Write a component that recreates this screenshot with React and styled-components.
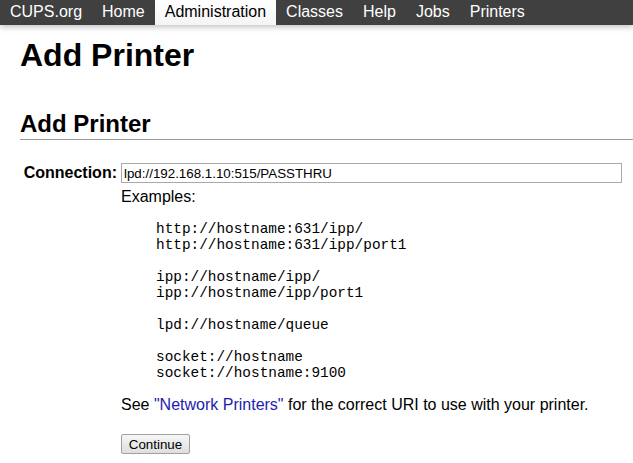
import React from 'react';
import styled, { createGlobalStyle } from 'styled-components';

const GlobalStyle = createGlobalStyle`
  html, body {
    margin: 0;
    padding: 0;
    background: #fff;
  }
  body {
    font-family: "Liberation Sans", Arial, sans-serif;
    font-size: 16px;
    color: #000;
  }
`;

const NavBar = styled.nav`
  display: flex;
  height: 25px;
  background: #404040;
  box-shadow: 0 2px 6px rgba(0, 0, 0, 0.25);
  position: relative;
`;

const NavItem = styled.a`
  display: block;
  padding: 0 10px;
  line-height: 24px;
  font-size: 16px;
  text-decoration: none;
  color: ${(p) => (p.$active ? '#000' : '#fff')};
  background: ${(p) => (p.$active ? 'linear-gradient(#fff, #f4f4f4)' : 'transparent')};
  white-space: nowrap;
`;

const Main = styled.main`
  padding: 12px 0 0 20px;
`;

const Title = styled.h1`
  margin: 0;
  font-size: 32px;
  line-height: 37px;
  font-weight: bold;
`;

const Section = styled.h2`
  margin: 36px 0 0;
  padding-bottom: 1px;
  font-size: 24px;
  line-height: 28px;
  font-weight: bold;
  border-bottom: 1px solid #999;
`;

const FormRow = styled.div`
  display: flex;
  align-items: flex-start;
  margin-top: 23px;
`;

const Label = styled.label`
  width: 97px;
  text-align: right;
  font-weight: bold;
  line-height: 18px;
  padding-top: 0.5px;
  margin-right: 4px;
`;

const Field = styled.div`
  display: flex;
  flex-direction: column;
  align-items: flex-start;
`;

const UriInput = styled.input`
  box-sizing: border-box;
  width: 501px;
  height: 20px;
  margin: 0;
  padding: 1px 2px;
  border: 1px solid #a9a9a9;
  font-family: "Liberation Sans", Arial, sans-serif;
  font-size: 13.333px;
  color: #000;
  outline: none;
`;

const Text = styled.p`
  margin: ${(p) => p.$top || 0}px 0 0;
  line-height: 18px;
`;

const Examples = styled.pre`
  margin: 15px 0 0;
  padding-left: 35px;
  font-family: "Liberation Mono", "Courier New", monospace;
  font-size: 14.4px;
  line-height: 16px;
`;

const Link = styled.a`
  color: #1c1cae;
  text-decoration: none;
`;

const Button = styled.button`
  box-sizing: border-box;
  margin-top: 20px;
  width: 69px;
  height: 20px;
  padding: 0;
  border: 1px solid #a0a0a0;
  border-radius: 2px;
  background: linear-gradient(#f6f6f6, #dedede);
  font-family: "Liberation Sans", Arial, sans-serif;
  font-size: 13.333px;
  color: #000;
`;

const navItems = ['CUPS.org', 'Home', 'Administration', 'Classes', 'Help', 'Jobs', 'Printers'];

const examples = `http://hostname:631/ipp/
http://hostname:631/ipp/port1

ipp://hostname/ipp/
ipp://hostname/ipp/port1

lpd://hostname/queue

socket://hostname
socket://hostname:9100`;

export default function App() {
  return (
    <>
      <GlobalStyle />
      <NavBar>
        {navItems.map((item) => (
          <NavItem key={item} href="#" $active={item === 'Administration'}>
            {item}
          </NavItem>
        ))}
      </NavBar>
      <Main>
        <Title>Add Printer</Title>
        <Section>Add Printer</Section>
        <FormRow>
          <Label htmlFor="uri">Connection:</Label>
          <Field>
            <UriInput id="uri" defaultValue="lpd://192.168.1.10:515/PASSTHRU" />
            <Text $top={5}>Examples:</Text>
            <Examples>{examples}</Examples>
            <Text $top={15}>
              See <Link href="#">"Network Printers"</Link> for the correct URI to use with your printer.
            </Text>
            <Button>Continue</Button>
          </Field>
        </FormRow>
      </Main>
    </>
  );
}
